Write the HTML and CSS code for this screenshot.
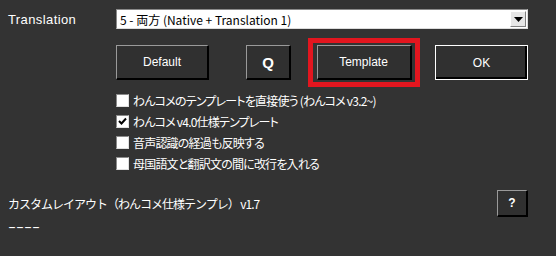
FILE: index.html
```html
<!DOCTYPE html>
<html lang="ja">
  <head>
    <meta charset="UTF-8" />
    <meta name="viewport" content="width=device-width, initial-scale=1.0" />
    <title>Translation</title>
    <link rel="stylesheet" href="styles.css">
  </head>
  <body>
    <div class="app">
      <div class="top-row">
        <span class="label">Translation</span>
        <div class="select">
          <span class="select-text">5 - 両方 (Native + Translation 1)</span>
          <span class="drop">
            <svg width="9" height="5" viewBox="0 0 9 5"><path d="M0 0H9L4.5 5Z" fill="#000" /></svg>
          </span>
        </div>
      </div>

      <div class="btn-row">
        <button class="btn btn-default">Default</button>
        <button class="btn btn-q">Q</button>
        <span class="mark">
          <button class="btn btn-template">Template</button>
        </span>
        <button class="btn btn-ok">OK</button>
      </div>

      <ul class="checks">
        <li class="check"><span class="box"></span>わんコメのテンプレートを直接使う (わんコメ v3.2~)</li>
        <li class="check"><span class="box checked"><svg width="9" height="9" viewBox="0 0 9 9"><path d="M1 4L3.5 6.5L8 1.5" stroke="#000" stroke-width="2" fill="none" /></svg></span>わんコメ v4.0仕様テンプレート</li>
        <li class="check"><span class="box"></span>音声認識の経過も反映する</li>
        <li class="check"><span class="box"></span>母国語文と翻訳文の間に改行を入れる</li>
      </ul>

      <div class="custom-row">
        <div class="custom-text">
          <div class="custom-title">カスタムレイアウト（わんコメ仕様テンプレ） v1.7</div>
          <div class="custom-line">----</div>
        </div>
        <button class="btn btn-help">?</button>
      </div>
    </div>
  </body>
</html>
```

FILE: styles.css
```css
body {
  margin: 0;
  background-color: #333333;
  color: #ffffff;
  font-family: "Liberation Sans", "Noto Sans CJK JP", sans-serif;
}
.app {
  width: 556px;
  height: 256px;
  padding-top: 9px;
  box-sizing: border-box;
}
.top-row {
  display: flex;
  align-items: center;
  height: 20px;
}
.label {
  width: 116px;
  padding-left: 8px;
  box-sizing: border-box;
  font-size: 13px;
  letter-spacing: 0.4px;
}
.select {
  display: flex;
  align-items: center;
  justify-content: space-between;
  width: 412px;
  height: 20px;
  box-sizing: border-box;
  background-color: #ffffff;
  border: 1px solid #8a8a8a;
  border-right-color: #dcdcdc;
  border-bottom-color: #dcdcdc;
  padding: 1px;
}
.select-text {
  color: #000000;
  font-family: "Noto Sans CJK JP", sans-serif;
  font-size: 12px;
  padding-left: 2px;
}
.drop {
  display: flex;
  align-items: center;
  justify-content: center;
  width: 16px;
  height: 16px;
  box-sizing: border-box;
  background-color: #e6e6e6;
  border: 1px solid #ffffff;
  border-right-color: #808080;
  border-bottom-color: #808080;
}
.btn-row {
  display: flex;
  align-items: center;
  margin-top: 9px;
  padding-left: 116px;
  height: 49px;
}
.btn {
  height: 35px;
  box-sizing: border-box;
  background-color: #303030;
  color: #ffffff;
  border: 1px solid #9a9a9a;
  border-right: 2px solid #000000;
  border-bottom: 2px solid #000000;
  font-family: "Liberation Sans", sans-serif;
  font-size: 12px;
  padding: 0;
}
.btn-default {
  width: 93px;
}
.btn-q {
  width: 45px;
  margin-left: 37px;
  font-size: 15px;
  font-weight: bold;
}
.mark {
  display: flex;
  align-items: center;
  justify-content: center;
  width: 112px;
  height: 49px;
  box-sizing: border-box;
  margin-left: 17px;
  border: 5px solid #e3161f;
}
.btn-template {
  width: 95px;
}
.btn-ok {
  width: 93px;
  margin-left: 15px;
  border: 1px solid #ffffff;
  box-shadow: inset -2px -2px 0 #000000;
}
.checks {
  list-style: none;
  margin: 3px 0 0;
  padding-left: 116px;
}
.check {
  display: flex;
  align-items: center;
  height: 21px;
  font-family: "Noto Sans CJK JP", sans-serif;
  font-size: 12px;
  font-feature-settings: "palt";
  letter-spacing: -0.8px;
}
.box {
  display: flex;
  align-items: center;
  justify-content: center;
  width: 13px;
  height: 13px;
  box-sizing: border-box;
  margin-right: 4px;
  background-color: #ffffff;
  border: 1px solid #8a8a8a;
  border-right-color: #e0e0e0;
  border-bottom-color: #e0e0e0;
}
.custom-row {
  display: flex;
  justify-content: space-between;
  align-items: flex-start;
  margin-top: 16px;
  padding: 0 28px 0 8px;
}
.custom-title {
  height: 27px;
  line-height: 27px;
  font-family: "Noto Sans CJK JP", sans-serif;
  font-size: 12px;
  letter-spacing: -1px;
}
.custom-line {
  height: 18px;
  line-height: 20px;
  font-size: 12px;
  transform: scaleX(2);
  transform-origin: left center;
}
.btn-help {
  width: 31px;
  height: 27px;
  font-weight: bold;
  font-size: 12px;
}
```
